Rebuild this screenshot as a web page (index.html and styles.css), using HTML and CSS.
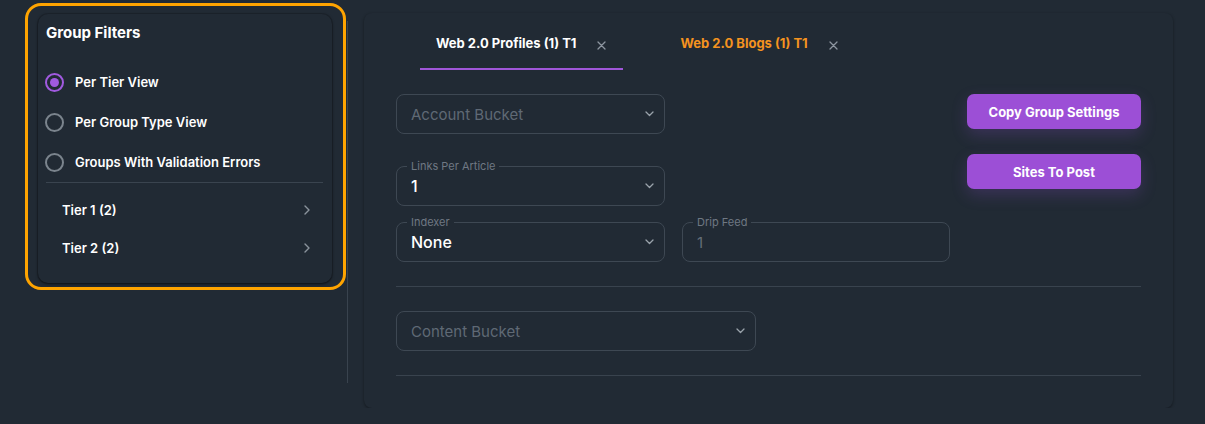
FILE: index.html
```html
<!DOCTYPE html>
<html lang="en">
<head>
<meta charset="utf-8">
<title>Group Filters</title>
<link rel="stylesheet" href="styles.css">
</head>
<body>
<div class="page">
  <aside class="sidebar">
    <div class="highlight">
      <div class="filter-card">
        <h2 class="filter-title">Group Filters</h2>
        <div class="radio-list">
          <label class="radio-row"><span class="radio checked"></span><span>Per Tier View</span></label>
          <label class="radio-row"><span class="radio"></span><span>Per Group Type View</span></label>
          <label class="radio-row"><span class="radio"></span><span>Groups With Validation Errors</span></label>
        </div>
        <div class="divider"></div>
        <ul class="tier-list">
          <li class="tier-row"><span>Tier 1 (2)</span><svg class="chev-right" width="6" height="10" viewBox="0 0 6 10"><path d="M1 1l4 4-4 4" fill="none" stroke="#8a939c" stroke-width="1.4" stroke-linecap="round" stroke-linejoin="round"/></svg></li>
          <li class="tier-row"><span>Tier 2 (2)</span><svg class="chev-right" width="6" height="10" viewBox="0 0 6 10"><path d="M1 1l4 4-4 4" fill="none" stroke="#8a939c" stroke-width="1.4" stroke-linecap="round" stroke-linejoin="round"/></svg></li>
        </ul>
      </div>
    </div>
  </aside>
  <div class="vline"></div>
  <main class="card">
    <nav class="tabs">
      <div class="tab active"><span>Web 2.0 Profiles (1) T1</span><svg class="close" width="9" height="9" viewBox="0 0 9 9"><path d="M1 1l7 7M8 1l-7 7" stroke="#8d96a0" stroke-width="1.3" stroke-linecap="round"/></svg></div>
      <div class="tab warn"><span>Web 2.0 Blogs (1) T1</span><svg class="close" width="9" height="9" viewBox="0 0 9 9"><path d="M1 1l7 7M8 1l-7 7" stroke="#8d96a0" stroke-width="1.3" stroke-linecap="round"/></svg></div>
    </nav>
    <section class="form-top">
      <div class="fields">
        <div class="select"><span class="placeholder">Account Bucket</span><svg class="chev" width="9" height="6" viewBox="0 0 9 6"><path d="M1 1l3.5 3.5L8 1" fill="none" stroke="#9aa3ab" stroke-width="1.3" stroke-linecap="round" stroke-linejoin="round"/></svg></div>
        <fieldset class="outlined links">
          <legend>Links Per Article</legend>
          <div class="value-row"><span class="value">1</span><svg class="chev" width="9" height="6" viewBox="0 0 9 6"><path d="M1 1l3.5 3.5L8 1" fill="none" stroke="#9aa3ab" stroke-width="1.3" stroke-linecap="round" stroke-linejoin="round"/></svg></div>
        </fieldset>
        <div class="pair">
          <fieldset class="outlined indexer">
            <legend>Indexer</legend>
            <div class="value-row"><span class="value">None</span><svg class="chev" width="9" height="6" viewBox="0 0 9 6"><path d="M1 1l3.5 3.5L8 1" fill="none" stroke="#9aa3ab" stroke-width="1.3" stroke-linecap="round" stroke-linejoin="round"/></svg></div>
          </fieldset>
          <fieldset class="outlined drip">
            <legend>Drip Feed</legend>
            <div class="value-row"><span class="value muted">1</span></div>
          </fieldset>
        </div>
      </div>
      <div class="actions">
        <button class="btn" type="button">Copy Group Settings</button>
        <button class="btn" type="button">Sites To Post</button>
      </div>
    </section>
    <hr class="hdiv">
    <div class="select content-bucket"><span class="placeholder">Content Bucket</span><svg class="chev" width="9" height="6" viewBox="0 0 9 6"><path d="M1 1l3.5 3.5L8 1" fill="none" stroke="#9aa3ab" stroke-width="1.3" stroke-linecap="round" stroke-linejoin="round"/></svg></div>
    <hr class="hdiv">
  </main>
</div>
</body>
</html>
```
FILE: styles.css
```css
body {
  margin: 0;
  background: #212a34;
  font-family: Inter, "Noto Sans", sans-serif;
  color: #ffffff;
}

.page {
  display: flex;
  align-items: flex-start;
  padding: 3px 0 0 25px;
}

/* Sidebar */
.highlight {
  width: 321px;
  height: 287px;
  box-sizing: border-box;
  border: 3px solid #ffa400;
  border-radius: 16px;
  padding: 8px 11px 4px 10px;
}

.filter-card {
  height: 100%;
  box-sizing: border-box;
  border-radius: 10px;
  background: #212a34;
  box-shadow: 0 1px 3px rgba(0, 0, 0, 0.55), 0 0 0 1px rgba(0, 0, 0, 0.12);
  padding: 9px 9px 16px 8px;
}

.filter-title {
  margin: 0 0 19px;
  font-size: 15px;
  line-height: 20px;
  font-weight: 700;
}

.radio-row {
  display: flex;
  align-items: center;
  gap: 11px;
  height: 40px;
  font-size: 13px;
  font-weight: 600;
}

.radio {
  width: 19px;
  height: 19px;
  margin-left: -1px;
  box-sizing: border-box;
  border: 2px solid #7b848d;
  border-radius: 50%;
  display: flex;
  align-items: center;
  justify-content: center;
}

.radio.checked {
  border-color: #a15ae0;
}

.radio.checked::after {
  content: "";
  width: 9px;
  height: 9px;
  border-radius: 50%;
  background: #a15ae0;
}

.divider {
  height: 1px;
  background: #3a444f;
}

.tier-list {
  list-style: none;
  margin: 8px 0 0;
  padding: 0;
}

.tier-row {
  height: 38px;
  display: flex;
  align-items: center;
  justify-content: space-between;
  padding: 0 13px 0 16px;
  font-size: 13px;
  font-weight: 600;
}

.vline {
  width: 1px;
  height: 362px;
  margin: 18px 0 0 1px;
  background: #39434e;
}

/* Main card */
.card {
  width: 809px;
  box-sizing: border-box;
  margin: 10px 0 0 16px;
  padding: 0 32px 32px;
  border-radius: 8px;
  background: #212a34;
  box-shadow: 0 1px 3px rgba(0, 0, 0, 0.4);
}

.tabs {
  display: flex;
  gap: 41px;
  padding-left: 24px;
}

.tab {
  display: flex;
  align-items: center;
  gap: 21px;
  padding: 20px 17px 15px 16px;
  border-bottom: 2px solid transparent;
  font-size: 13px;
  line-height: 20px;
  font-weight: 700;
}

.tab .close {
  margin-top: 4px;
}

.tab.active {
  border-bottom-color: #a056d9;
}

.tab.warn {
  color: #f5931f;
}

.form-top {
  display: flex;
  justify-content: space-between;
  margin-top: 24px;
}

.fields {
  width: 554px;
  display: flex;
  flex-direction: column;
}

.select {
  width: 269px;
  height: 40px;
  box-sizing: border-box;
  border: 1px solid #3e4853;
  border-radius: 8px;
  padding: 0 10px 0 14px;
  display: flex;
  align-items: center;
  justify-content: space-between;
}

.placeholder {
  font-size: 15px;
  color: #5f6975;
}

.outlined {
  margin: 0;
  min-width: 0;
  height: 46px;
  box-sizing: border-box;
  border: 1px solid #3e4853;
  border-radius: 8px;
  padding: 0 10px 6px 14px;
}

.outlined legend {
  margin-left: -4px;
  padding: 0 4px;
  font-size: 11px;
  line-height: 13px;
  color: #6f7883;
}

.value-row {
  height: 26px;
  display: flex;
  align-items: center;
  justify-content: space-between;
}

.value {
  font-size: 16px;
  font-weight: 500;
  color: #ffffff;
}

.value.muted {
  font-weight: 400;
  font-size: 15px;
  color: #646e79;
}

.links {
  width: 269px;
  margin-top: 26px;
}

.pair {
  display: flex;
  gap: 17px;
  margin-top: 10px;
}

.indexer {
  width: 269px;
}

.drip {
  width: 268px;
}

.actions {
  width: 174px;
  display: flex;
  flex-direction: column;
  gap: 25px;
}

.btn {
  height: 35px;
  border: 0;
  border-radius: 7px;
  background: #9c4fd6;
  color: #ffffff;
  font-family: Inter, "Noto Sans", sans-serif;
  font-size: 13px;
  font-weight: 700;
  box-shadow: 0 6px 16px rgba(150, 80, 220, 0.22);
}

.hdiv {
  height: 1px;
  border: 0;
  margin: 24px 0 0;
  background: #39434e;
}

.content-bucket {
  width: 360px;
  margin-top: 24px;
}
```
